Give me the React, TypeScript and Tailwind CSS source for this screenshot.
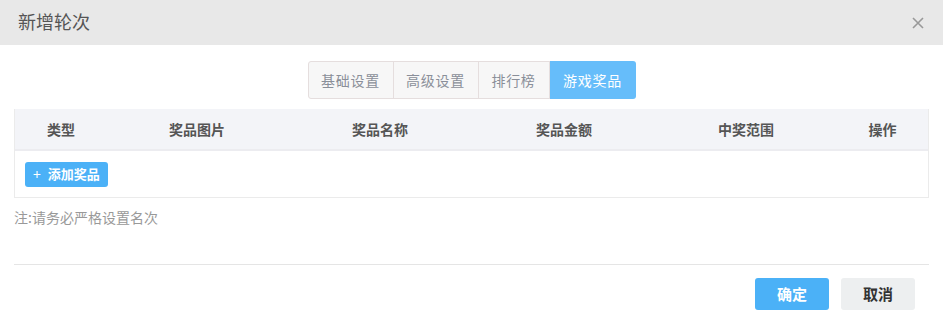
import { useState } from "react";

const TABS = [
  { label: "基础设置", width: "w-[86px]" },
  { label: "高级设置", width: "w-[86px]" },
  { label: "排行榜", width: "w-[72px]" },
  { label: "游戏奖品", width: "w-[86px]" },
];

const COLUMNS = [
  { label: "类型", width: "w-[92px]" },
  { label: "奖品图片", width: "w-[180px]" },
  { label: "奖品名称", width: "w-[186px]" },
  { label: "奖品金额", width: "w-[182px]" },
  { label: "中奖范围", width: "w-[182px]" },
  { label: "操作", width: "flex-1" },
];

export default function App() {
  const [active, setActive] = useState(3);

  return (
    <div className="w-[943px] h-[323px] bg-white font-['Noto_Sans_CJK_SC','Noto_Sans',sans-serif] overflow-hidden">
      {/* Header */}
      <div className="h-[45px] bg-[#e8e8e8] flex items-center justify-between pl-[18px] pr-[19px]">
        <span className="text-[18px] text-[#555] leading-none -mt-[3px]">新增轮次</span>
        <svg width="12" height="12" viewBox="0 0 12 12" className="text-[#999]">
          <path d="M1 1 L11 11 M11 1 L1 11" stroke="currentColor" strokeWidth="1.6" />
        </svg>
      </div>

      {/* Tabs */}
      <div className="flex justify-center pt-[16px]">
        <div className="flex h-[38px]">
          {TABS.map((t, i) => (
            <button
              key={t.label}
              onClick={() => setActive(i)}
              className={
                i === active
                  ? `${t.width} h-full text-[14px] tracking-[0.7px] text-white bg-[#66bdfa] rounded-r-[3px]`
                  : `${t.width} h-full text-[14px] tracking-[0.7px] text-[#8a8f99] bg-[#f7f7f7] border border-[#e5dede] -ml-px first:ml-0 first:rounded-l-[3px]`
              }
            >
              {t.label}
            </button>
          ))}
        </div>
      </div>

      {/* Table */}
      <div className="mx-[14px] mt-[10px] border border-[#ebebeb] border-t-0">
        <div className="flex h-[42px] bg-[#f3f4f8] border-b-2 border-[#ececf0]">
          {COLUMNS.map((c) => (
            <div
              key={c.label}
              className={`${c.width} flex items-center justify-center text-[14px] font-bold text-[#555]`}
            >
              {c.label}
            </div>
          ))}
        </div>
        <div className="h-[46px] flex items-center pl-[10px]">
          <button className="h-[25px] px-[8px] rounded-[3px] bg-[#4bb1f7] text-white text-[13px] font-bold flex items-center gap-[7px]">
            <span className="font-normal text-[14px]">+</span>
            <span>添加奖品</span>
          </button>
        </div>
      </div>

      {/* Note */}
      <div className="mx-[14px] mt-[9px] text-[14px] text-[#999]">注:请务必严格设置名次</div>

      {/* Footer */}
      <div className="mx-[14px] mt-[36px] border-t border-[#e5e5e5]" />
      <div className="flex justify-end gap-[12px] pr-[28px] pt-[13px]">
        <button className="w-[74px] h-[32px] rounded-[3px] bg-[#4bb1f7] text-white text-[15px] font-bold">确定</button>
        <button className="w-[74px] h-[32px] rounded-[3px] bg-[#edeff0] text-[#333] text-[15px] font-bold">取消</button>
      </div>
    </div>
  );
}
